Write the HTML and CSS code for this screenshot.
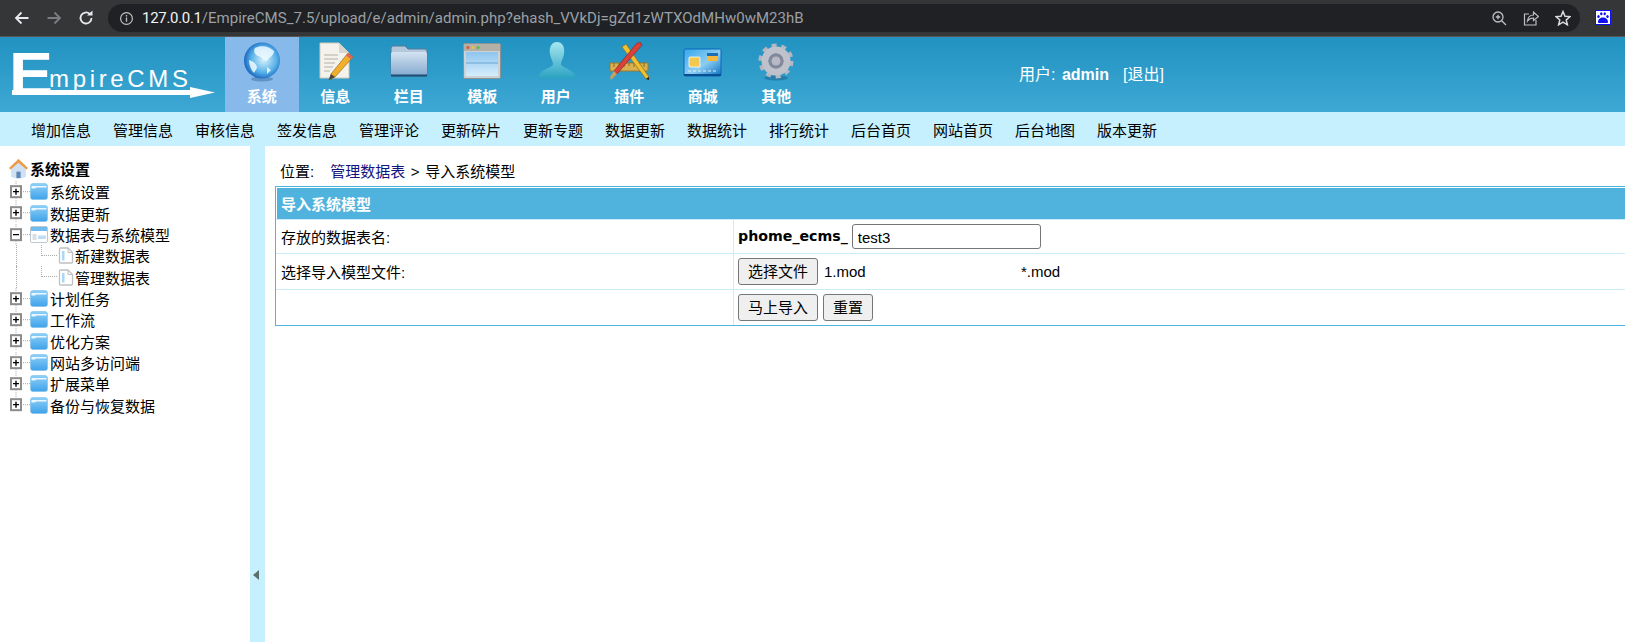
FILE: index.html
```html
<!DOCTYPE html>
<html lang="zh-CN">
<head>
<meta charset="utf-8">
<title>EmpireCMS</title>
<link rel="stylesheet" href="styles.css">
</head>
<body>
<svg class="defs" width="0" height="0" aria-hidden="true">
  <defs>
    <linearGradient id="gFolder" x1="0" y1="0" x2="0" y2="1"><stop offset="0" stop-color="#8fd0f7"/><stop offset="1" stop-color="#3fa2ea"/></linearGradient>
    <linearGradient id="gBigFolder" x1="0" y1="0" x2="0" y2="1"><stop offset="0" stop-color="#d4e3f1"/><stop offset="1" stop-color="#86abd0"/></linearGradient>
    <linearGradient id="gWin" x1="0" y1="0" x2="0" y2="1"><stop offset="0" stop-color="#8fc4ee"/><stop offset="1" stop-color="#d5eefc"/></linearGradient>
    <linearGradient id="gUser" x1="0" y1="0" x2="0" y2="1"><stop offset="0" stop-color="#a5e6f0"/><stop offset="1" stop-color="#2ba3c2"/></linearGradient>
    <linearGradient id="gCard" x1="0" y1="0" x2="1" y2="1"><stop offset="0" stop-color="#35a8ec"/><stop offset=".55" stop-color="#8ccdf2"/><stop offset="1" stop-color="#0c6fc4"/></linearGradient>
    <radialGradient id="gGlobe" cx=".55" cy=".48" r=".6"><stop offset="0" stop-color="#d8f2fb"/><stop offset=".6" stop-color="#56b0e8"/><stop offset="1" stop-color="#0b52b4"/></radialGradient>
    <symbol id="plus" viewBox="0 0 22 21">
      <path d="M8 0V3M8 17V21M15 10.500H22" stroke="#aaa" stroke-dasharray="1 1" fill="none"/>
      <rect x="3" y="5" width="10" height="11" fill="#fff" stroke="#8c8c8c" stroke-width="2"/>
      <path d="M5 10.500H11M8 7.500V13.500" stroke="#000" stroke-width="1.400"/>
    </symbol>
    <symbol id="plusEnd" viewBox="0 0 22 21">
      <path d="M8 0V3M15 10.500H22" stroke="#aaa" stroke-dasharray="1 1" fill="none"/>
      <rect x="3" y="5" width="10" height="11" fill="#fff" stroke="#8c8c8c" stroke-width="2"/>
      <path d="M5 10.500H11M8 7.500V13.500" stroke="#000" stroke-width="1.400"/>
    </symbol>
    <symbol id="minus" viewBox="0 0 22 21">
      <path d="M8 0V3M8 17V21M15 10.500H22" stroke="#aaa" stroke-dasharray="1 1" fill="none"/>
      <rect x="3" y="5" width="10" height="11" fill="#fff" stroke="#8c8c8c" stroke-width="2"/>
      <path d="M5 10.500H11" stroke="#000" stroke-width="1.400"/>
    </symbol>
    <symbol id="folder" viewBox="0 0 18 17">
      <path d="M.5 3Q.5 .5 3 .5H15Q17.500 .5 17.500 3V14Q17.500 16.500 15 16.500H3Q.5 16.500 .5 14Z" fill="url(#gFolder)" stroke="#7cbfe8" stroke-width=".6"/>
      <path d="M1.500 3H16.500V4.500H6L5 5.500H1.500Z" fill="#e9f7ff"/>
    </symbol>
    <symbol id="folderOpen" viewBox="0 0 18 17">
      <rect x=".5" y=".5" width="17" height="16" rx="1.500" fill="#fff" stroke="#bcc7d0"/>
      <rect x="1" y="1" width="16" height="4" fill="#6fbcef"/>
      <rect x="2.500" y="8" width="4" height="6" fill="#d9dfe5"/>
      <rect x="8" y="9.500" width="8" height="3.500" fill="#bfdcf2"/>
    </symbol>
    <symbol id="page" viewBox="0 0 16 17">
      <path d="M1.500 2Q1.500 1 2.500 1H10L14.500 5.500V15Q14.500 16 13.500 16H2.500Q1.500 16 1.500 15Z" fill="#fff" stroke="#c0c0c0" stroke-width="1.300"/>
      <path d="M10 1V5.500H14.500" fill="none" stroke="#c0c0c0"/>
      <rect x="4" y="4" width="2.500" height="9.500" fill="#a9d7f5"/>
    </symbol>
  </defs>
</svg>

<header class="chrome">
  <div class="chrome-nav">
    <svg class="cn-ico" viewBox="0 0 16 16"><path d="M14.500 8H2.500M7.500 2.500L2 8L7.500 13.500" fill="none" stroke="#e8eaed" stroke-width="1.800"/></svg>
    <svg class="cn-ico" viewBox="0 0 16 16"><path d="M1.500 8H13.500M8.500 2.500L14 8L8.500 13.500" fill="none" stroke="#7c7d80" stroke-width="1.800"/></svg>
    <svg class="cn-ico" viewBox="0 0 16 16"><path d="M13.500 8A5.500 5.500 0 1 1 11.800 4" fill="none" stroke="#e8eaed" stroke-width="1.800"/><path d="M9 5.500H14.500V0.500Z" fill="#e8eaed"/></svg>
  </div>
  <div class="omnibox">
    <svg class="info-ico" viewBox="0 0 16 16"><circle cx="8" cy="8" r="6.300" fill="none" stroke="#bdc1c6" stroke-width="1.300"/><path d="M8 7V11.500M8 4.300V5.800" stroke="#bdc1c6" stroke-width="1.400"/></svg>
    <span class="url"><span class="url-host">127.0.0.1</span>/EmpireCMS_7.5/upload/e/admin/admin.php?ehash_VVkDj=gZd1zWTXOdMHw0wM23hB</span>
    <span class="omni-actions">
      <svg class="oa-ico" viewBox="0 0 16 16"><circle cx="7" cy="7" r="5" fill="none" stroke="#bdc1c6" stroke-width="1.300"/><path d="M10.700 10.700L15 15M4.800 7H9.200M7 4.800V9.200" stroke="#bdc1c6" stroke-width="1.300"/></svg>
      <svg class="oa-ico" viewBox="0 0 16 16"><path d="M6 4H1.500V15H13V10" fill="none" stroke="#bdc1c6" stroke-width="1.200"/><path d="M4.500 11C5 7 7.500 5 10.500 5V2L15.500 6.500L10.500 10.500V8C8.500 8 6 9 4.500 11Z" fill="none" stroke="#bdc1c6" stroke-width="1.200"/></svg>
      <svg class="oa-ico" viewBox="0 0 16 16"><path d="M8 1.500L10 6.200L15 6.600L11.200 9.900L12.400 14.800L8 12.200L3.600 14.800L4.800 9.900L1 6.600L6 6.200Z" fill="none" stroke="#dadce0" stroke-width="1.500"/></svg>
    </span>
  </div>
  <svg class="ext" viewBox="0 0 16 15"><rect x=".5" y=".5" width="15" height="14" fill="#fff" stroke="#0f0ff0"/><g fill="#0f0ff0"><path d="M3 12C3 9 5.500 7.500 8 7.500S13 9 13 12C13 13.500 11 13 8 13S3 13.500 3 12Z"/><ellipse cx="3.500" cy="6.500" rx="1.200" ry="1.500"/><ellipse cx="6.300" cy="3.800" rx="1.200" ry="1.500"/><ellipse cx="9.700" cy="3.800" rx="1.200" ry="1.500"/><ellipse cx="12.500" cy="6.500" rx="1.200" ry="1.500"/></g></svg>
</header>

<div class="topbar">
  <div class="logo">
    <svg class="logo-svg" viewBox="0 0 225 75" width="225" height="75">
      <text class="logo-e" x="9" y="58" textLength="44" lengthAdjust="spacingAndGlyphs">E</text>
      <text class="logo-t" x="49" y="50" textLength="139" lengthAdjust="spacing">mpireCMS</text>
      <path d="M12 53H190V50L215 55.500L190 61V58H12Z" fill="#fff"/>
    </svg>
  </div>
  <nav class="tabs">
    <a class="tab tab-on">
      <svg class="tab-ico" viewBox="0 0 40 44"><ellipse cx="20" cy="37" rx="11" ry="2.500" fill="#3a6e9e" opacity=".5"/><circle cx="20" cy="18.500" r="18" fill="url(#gGlobe)"/><path d="M13 6C19 3 27 4 32 9C32 14 27 15 25 19C21 18 20 15 16 14C13 13 11 9 13 6ZM7 18C11 19 15 22 15 26L12 31C9 28 7 23 7 18ZM25 25L29 28L25 32Z" fill="#eefaff" opacity=".85"/></svg>
      <span>系统</span>
    </a>
    <a class="tab">
      <svg class="tab-ico" viewBox="0 0 40 44"><path d="M5 1H24L34 11V36H5Z" fill="#f4f2ec" stroke="#cfc9ba"/><path d="M24 1V11H34Z" fill="#d9d6cd"/><path d="M9 13H23M9 17H23M9 21H20M9 25H18M9 29H15" stroke="#b3b0a6" stroke-width="1.200"/><path d="M33 11L38 15L20 35L14 38L16 32Z" fill="#f2b02a" stroke="#8a5a10" stroke-width=".6"/><path d="M33 11L38 15L36 17.500L31 13.500Z" fill="#e0665a"/><path d="M16 32L14 38L20 35Z" fill="#444"/></svg>
      <span>信息</span>
    </a>
    <a class="tab">
      <svg class="tab-ico" viewBox="0 0 40 44"><path d="M2 6Q2 4 4 4H16L19 7H36Q38 7 38 9V32Q38 34 36 34H4Q2 34 2 32Z" fill="#b4c8dc" stroke="#50789a"/><rect x="2" y="10" width="36" height="23" rx="2" fill="url(#gBigFolder)"/><path d="M2 33.500H38" stroke="#1f4f74" stroke-width="2"/></svg>
      <span>栏目</span>
    </a>
    <a class="tab">
      <svg class="tab-ico" viewBox="0 0 40 44"><rect x="1.500" y="1.500" width="37" height="35" rx="1.500" fill="#cdd2d4" stroke="#8d9296"/><rect x="2" y="2" width="36" height="7" fill="#b3b0a8"/><circle cx="6" cy="5.500" r="1.600" fill="#e2543c"/><circle cx="11" cy="5.500" r="1.600" fill="#eec23a"/><circle cx="16" cy="5.500" r="1.600" fill="#62b84a"/><rect x="4" y="10" width="32" height="24" fill="url(#gWin)"/><path d="M4 21H36" stroke="#6aa6d6"/></svg>
      <span>模板</span>
    </a>
    <a class="tab">
      <svg class="tab-ico" viewBox="0 0 40 44"><path d="M21 0C27 0 29 6 28 12C27.500 16 25 19 25 22C25 26 38 27 39.500 35Q39.500 36.500 37 36.500H5Q2.500 36.500 2.500 35C4 27 17 26 17 22C17 19 14.500 16 14 12C13 6 15 0 21 0Z" fill="url(#gUser)"/></svg>
      <span>用户</span>
    </a>
    <a class="tab">
      <svg class="tab-ico" viewBox="0 0 40 44"><path d="M1 21H39V29H1Z" fill="#d9b050" stroke="#9a7a2c"/><path d="M5 21V25M10 21V24M15 21V25M20 21V24M25 21V25M30 21V24M35 21V25" stroke="#8a6a22"/><path d="M13 5L17 2L40 35L37 37Z" fill="#f2c22e" stroke="#8a6a22" stroke-width=".7"/><path d="M37 37L40 35L40 38Z" fill="#222"/><path d="M27 2L31 0L33 3L8 32L5 29Z" fill="#d8423a" stroke="#8c2a24" stroke-width=".7"/><path d="M5 29L8 32L2 38L1 35Z" fill="#c4a062"/></svg>
      <span>插件</span>
    </a>
    <a class="tab">
      <svg class="tab-ico" viewBox="0 0 40 44"><rect x="1" y="7" width="37" height="27" rx="1.500" fill="url(#gCard)" stroke="#0b66b8"/><path d="M1 33H38" stroke="#0a4f90" stroke-width="2"/><rect x="24" y="11" width="11" height="3" fill="#1d6fb5"/><rect x="24" y="14" width="11" height="5" fill="#f6b93c"/><rect x="6" y="15" width="11" height="10" rx="1" fill="#f4c84e" stroke="#fff" stroke-width=".8"/><path d="M5 29H35" stroke="#d7effc" stroke-dasharray="3 2"/></svg>
      <span>商城</span>
    </a>
    <a class="tab">
      <svg class="tab-ico" viewBox="0 0 40 44"><ellipse cx="20" cy="36" rx="12" ry="2.500" fill="#1a6d98" opacity=".6"/><circle cx="20" cy="19" r="15.500" fill="none" stroke="#b4b6c1" stroke-width="4" stroke-dasharray="5 4.740"/><circle cx="20" cy="19" r="11" fill="none" stroke="#bfc1cb" stroke-width="7"/><circle cx="20" cy="19" r="7.500" fill="#85889a"/><circle cx="20" cy="19" r="4.500" fill="#b7b9c4"/></svg>
      <span>其他</span>
    </a>
  </nav>
  <div class="userbox">用户: <b>admin</b><span class="logout">[退出]</span></div>
</div>

<div class="subnav">
  <a>增加信息</a><a>管理信息</a><a>审核信息</a><a>签发信息</a><a>管理评论</a><a>更新碎片</a><a>更新专题</a><a>数据更新</a><a>数据统计</a><a>排行统计</a><a>后台首页</a><a>网站首页</a><a>后台地图</a><a>版本更新</a>
</div>

<div class="workspace">
  <aside class="tree">
    <div class="tree-title">
      <svg class="home" viewBox="0 0 20 20"><path d="M10 1L19 9.500L17 10.500V18L10 20L3 18V10.500L1 9.500Z" fill="#cfe0f2"/><path d="M10 1L19 9.500L17.500 11L10 4.500L2.500 11L1 9.500Z" fill="#ef9a45"/><path d="M8 13H12V19H8Z" fill="#5d87b6"/></svg>
      <b>系统设置</b>
    </div>
    <div class="node"><svg class="joint"><use href="#plus"/></svg><svg class="nico"><use href="#folder"/></svg><span>系统设置</span></div>
    <div class="node"><svg class="joint"><use href="#plus"/></svg><svg class="nico"><use href="#folder"/></svg><span>数据更新</span></div>
    <div class="node"><svg class="joint"><use href="#minus"/></svg><svg class="nico"><use href="#folderOpen"/></svg><span>数据表与系统模型</span></div>
    <div class="node child"><span class="spine"></span><span class="elbow"></span><svg class="pico"><use href="#page"/></svg><span>新建数据表</span></div>
    <div class="node child last"><span class="spine"></span><span class="elbow"></span><svg class="pico"><use href="#page"/></svg><span>管理数据表</span></div>
    <div class="node"><svg class="joint"><use href="#plus"/></svg><svg class="nico"><use href="#folder"/></svg><span>计划任务</span></div>
    <div class="node"><svg class="joint"><use href="#plus"/></svg><svg class="nico"><use href="#folder"/></svg><span>工作流</span></div>
    <div class="node"><svg class="joint"><use href="#plus"/></svg><svg class="nico"><use href="#folder"/></svg><span>优化方案</span></div>
    <div class="node"><svg class="joint"><use href="#plus"/></svg><svg class="nico"><use href="#folder"/></svg><span>网站多访问端</span></div>
    <div class="node"><svg class="joint"><use href="#plus"/></svg><svg class="nico"><use href="#folder"/></svg><span>扩展菜单</span></div>
    <div class="node"><svg class="joint"><use href="#plusEnd"/></svg><svg class="nico"><use href="#folder"/></svg><span>备份与恢复数据</span></div>
  </aside>
  <div class="splitter"><span class="split-arrow"></span></div>
  <main class="content">
    <div class="crumb">位置:<a class="crumb-link">管理数据表</a> &gt; 导入系统模型</div>
    <table class="form-table">
      <tr class="head"><th colspan="2">导入系统模型</th></tr>
      <tr class="r1"><td class="c1">存放的数据表名:</td><td class="c2"><b class="prefix">phome_ecms_</b><input class="text-in" type="text" value="test3"></td></tr>
      <tr class="r2"><td class="c1">选择导入模型文件:</td><td class="c2"><button class="btn">选择文件</button><span class="fname">1.mod</span><span class="ext-note">*.mod</span></td></tr>
      <tr class="r3"><td class="c1"></td><td class="c2"><button class="btn">马上导入</button><button class="btn btn-2">重置</button></td></tr>
    </table>
  </main>
</div>
</body>
</html>
```
FILE: styles.css
```css
* { box-sizing: border-box; }
html, body { margin: 0; height: 100%; overflow: hidden; }
body {
  display: flex;
  flex-direction: column;
  font-family: "Liberation Sans", "Noto Sans CJK SC", sans-serif;
  font-size: 15px;
  color: #000;
  background: #fff;
}
.defs { position: absolute; }

/* browser bar */
.chrome {
  height: 37px;
  flex: none;
  background: #353638;
  display: flex;
  align-items: flex-start;
  padding-top: 4px;
  border-bottom: 1px solid #555;
}
.chrome-nav { width: 108px; display: flex; padding-left: 14px; gap: 16px; padding-top: 6px; }
.cn-ico { width: 16px; height: 16px; flex: none; }
.omnibox {
  width: 1472px;
  height: 28px;
  border-radius: 14px;
  background: #202124;
  display: flex;
  align-items: center;
  padding-left: 11px;
  padding-right: 9px;
}
.info-ico { width: 15px; height: 15px; flex: none; }
.url {
  margin-left: 8px;
  font-family: "Roboto", "Liberation Sans", sans-serif;
  font-size: 15px;
  letter-spacing: 0.03px;
  color: #9aa0a6;
  white-space: nowrap;
}
.url-host { color: #f1f3f4; letter-spacing: -0.3px; }
.omni-actions { margin-left: auto; display: flex; gap: 16px; }
.oa-ico { width: 16px; height: 16px; }
.ext { width: 16px; height: 15px; margin: 6px 0 0 15px; flex: none; }

/* top blue bar */
.topbar {
  height: 75px;
  flex: none;
  display: flex;
  background: linear-gradient(#2192c1, #3ea8d4);
}
.logo { width: 225px; flex: none; }
.logo-svg { display: block; }
.logo-e { font-family: "Liberation Sans", sans-serif; font-weight: 700; font-size: 62px; fill: #fff; }
.logo-t { font-family: "Liberation Sans", sans-serif; font-size: 24px; fill: #fff; }
.tabs { display: flex; width: 588px; flex: none; }
.tab {
  width: 73.5px;
  display: flex;
  flex-direction: column;
  align-items: center;
  padding-top: 5px;
  color: #fff;
  font-weight: 700;
  font-size: 15px;
  line-height: 20px;
}
.tab-on { background: #87baeb; }
.tab-ico { width: 40px; height: 44px; display: block; margin-bottom: 1px; }
.userbox {
  margin-left: 206px;
  padding-top: 28px;
  color: #fff;
  font-size: 16px;
  line-height: 20px;
  white-space: pre;
}
.userbox b { margin-left: 2px; }
.logout { margin-left: 14px; }

/* sub nav */
.subnav {
  height: 34px;
  flex: none;
  background: #c7f0ff;
  display: flex;
  align-items: center;
  padding-left: 31px;
  gap: 22px;
  font-size: 15px;
}
.subnav a { width: 60px; white-space: nowrap; }

/* workspace */
.workspace { flex: 1; display: flex; min-height: 0; }
.tree { width: 250px; flex: none; padding: 12px 0 0 8px; font-size: 15px; }
.tree-title { display: flex; align-items: center; height: 21px; gap: 1px; margin-bottom: 2px; }
.home { width: 21px; height: 21px; flex: none; }
.node { position: relative; display: flex; align-items: center; height: 21.35px; white-space: nowrap; }
.joint { width: 22px; height: 21.35px; flex: none; }
.nico { width: 18px; height: 17px; flex: none; margin-right: 2px; }
.child { padding-left: 50px; }
.pico { width: 16px; height: 17px; flex: none; margin-right: 1px; }
.spine { position: absolute; left: 8px; top: 0; bottom: 0; border-left: 1px dotted #aaa; }
.elbow {
  position: absolute;
  left: 33px;
  top: 0;
  width: 16px;
  height: 11px;
  border-left: 1px dotted #aaa;
  border-bottom: 1px dotted #aaa;
}
.splitter { width: 15px; flex: none; background: #c7f0ff; display: flex; align-items: flex-end; padding-left: 3px; padding-bottom: 62px; }
.split-arrow {
  width: 0;
  height: 0;
  border-style: solid;
  border-width: 5px 6px 5px 0;
  border-color: transparent #5b6f6c transparent transparent;
}
.content { flex: 1; min-width: 0; padding: 8px 0 0 10px; overflow: hidden; font-size: 15px; }
.crumb { height: 32px; padding: 6px 0 0 5px; white-space: pre; word-spacing: 1.5px; }
.crumb-link { color: #13137f; margin-left: 16px; }
.form-table {
  width: 1360px;
  border-collapse: separate;
  border-spacing: 0;
  border: 1px solid #4fb4de;
}
.form-table th {
  height: 32px;
  background: #4fb3dd;
  background-clip: padding-box;
  border-top: 1px solid #fff;
  border-left: 1px solid #fff;
  color: #fff;
  text-align: left;
  padding: 0 0 0 4px;
  font-size: 15px;
}
.form-table td { padding: 0 0 0 5px; border-top: 1px solid #cbedfb; }
.head { height: 32px; }
.r1 td { height: 34px; }
.r2 td { height: 36px; }
.r3 td { height: 36px; }
.c1 { width: 458px; border-right: 1px solid #cbedfb; }
.c2.c2 { padding-left: 4px; }
.prefix { font-family: "DejaVu Sans", sans-serif; font-size: 14.2px; vertical-align: -1px; }
.text-in {
  width: 189px;
  height: 25px;
  margin-left: 4px;
  padding: 2px 5px 0;
  border: 1px solid #767676;
  border-radius: 3px;
  font: 15px "Liberation Sans", sans-serif;
  vertical-align: middle;
}
.btn {
  height: 27px;
  padding: 0 9px;
  background: #efefef;
  border: 1px solid #767676;
  border-radius: 3px;
  font: 15px "Liberation Sans", "Noto Sans CJK SC", sans-serif;
  line-height: 20px;
  color: #000;
  vertical-align: middle;
}
.btn-2 { margin-left: 5px; }
.fname { display: inline-block; width: 197px; margin-left: 6px; vertical-align: middle; }
.ext-note { vertical-align: middle; }
```
